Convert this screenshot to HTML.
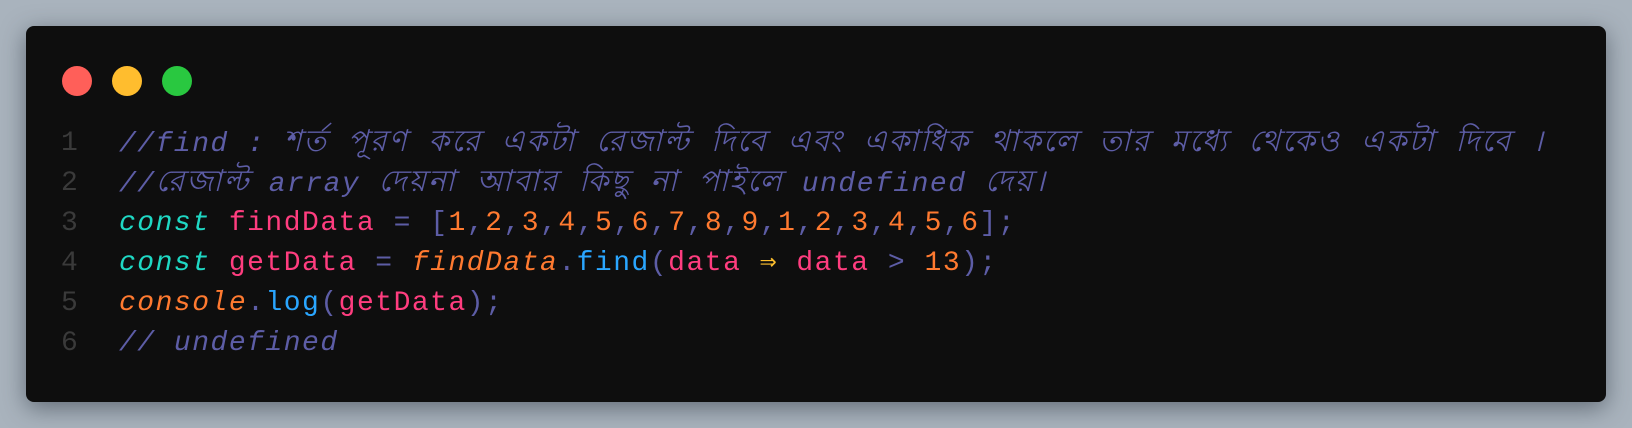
<!DOCTYPE html>
<html><head><meta charset="utf-8"><style>
html,body{margin:0;padding:0;width:1632px;height:428px;overflow:hidden;background:#a9b3bd;}
.win{position:absolute;left:26px;top:26px;width:1580px;height:376px;background:#0e0e0e;border-radius:8px;box-shadow:0 6px 24px rgba(40,50,60,.55);}
.dot{position:absolute;top:40px;width:30px;height:30px;border-radius:50%;}
.code{position:absolute;left:0;top:98px;font-family:"Liberation Mono","DejaVu Sans Mono",monospace;font-size:28px;letter-spacing:1.5px;white-space:pre;}
.ln{position:absolute;height:40px;line-height:40px;}
.n{position:absolute;left:35px;color:#3a3a3a;}
.t{position:absolute;left:93px;}
.c{color:#5d5da6;font-style:italic;}
.b{font-size:30px;letter-spacing:1.9px;}
.k{color:#1fd8c4;font-style:italic;}
.v{color:#ff3d7f;}
.num{color:#ff7a30;}
.p{color:#5d5da6;}
.f{color:#2aa6ff;}
.o{color:#ff7a30;font-style:italic;}
.a{color:#ffc02e;}
</style></head><body>
<div class="win">
<div class="dot" style="left:36px;background:#ff5f59"></div>
<div class="dot" style="left:86px;background:#ffbd2e"></div>
<div class="dot" style="left:136px;background:#29c840"></div>
<div class="code">
<div class="ln" style="top:0"><span class="n">1</span><span class="t c">//find : <span class="b">শর্ত পূরণ করে একটা রেজাল্ট দিবে এবং একাধিক থাকলে তার মধ্যে থেকেও একটা দিবে ।</span></span></div>
<div class="ln" style="top:40px"><span class="n">2</span><span class="t c">//<span class="b">রেজাল্ট</span> array <span class="b">দেয়না আবার কিছু না পাইলে</span> undefined <span class="b">দেয়।</span></span></div>
<div class="ln" style="top:80px"><span class="n">3</span><span class="t"><span class="k">const</span> <span class="v">findData</span> <span class="p">=</span> <span class="p">[</span><span class="num">1</span><span class="p">,</span><span class="num">2</span><span class="p">,</span><span class="num">3</span><span class="p">,</span><span class="num">4</span><span class="p">,</span><span class="num">5</span><span class="p">,</span><span class="num">6</span><span class="p">,</span><span class="num">7</span><span class="p">,</span><span class="num">8</span><span class="p">,</span><span class="num">9</span><span class="p">,</span><span class="num">1</span><span class="p">,</span><span class="num">2</span><span class="p">,</span><span class="num">3</span><span class="p">,</span><span class="num">4</span><span class="p">,</span><span class="num">5</span><span class="p">,</span><span class="num">6</span><span class="p">];</span></span></div>
<div class="ln" style="top:120px"><span class="n">4</span><span class="t"><span class="k">const</span> <span class="v">getData</span> <span class="p">=</span> <span class="o">findData</span><span class="p">.</span><span class="f">find</span><span class="p">(</span><span class="v">data</span> <span class="a">⇒</span> <span class="v">data</span> <span class="p">&gt;</span> <span class="num">13</span><span class="p">);</span></span></div>
<div class="ln" style="top:160px"><span class="n">5</span><span class="t"><span class="o">console</span><span class="p">.</span><span class="f">log</span><span class="p">(</span><span class="v">getData</span><span class="p">);</span></span></div>
<div class="ln" style="top:200px"><span class="n">6</span><span class="t c">// undefined</span></div>
</div>
</div>
</body></html>
